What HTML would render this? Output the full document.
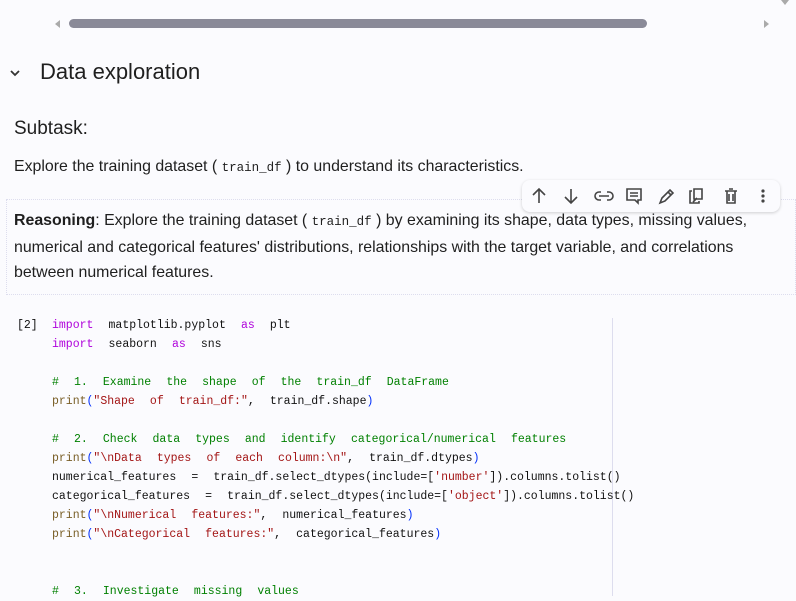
<!DOCTYPE html>
<html><head><style>
body{margin:0;width:796px;height:596px;overflow:hidden;background:#fbfbfe;font-family:"Liberation Sans",Arial,sans-serif;color:#1f1f1f;position:relative}
.a{position:absolute;white-space:nowrap}
.code{font-family:"Liberation Mono","Noto Sans CJK SC",monospace;font-size:11.5px;word-spacing:8.2px;color:#111;line-height:19px;white-space:pre}
.k{color:#af00db}.c{color:#008000}.s{color:#a31515}.f{color:#795e26}.p{color:#0431fa}
.ic{font-family:"Liberation Mono",monospace;font-size:12.5px}
</style></head><body>
<div class="a" style="left:55px;top:20px;width:0;height:0;border-top:4px solid transparent;border-bottom:4px solid transparent;border-right:5px solid #aaa"></div>
<div class="a" style="left:69px;top:19px;width:578px;height:9px;border-radius:5px;background:#8a8a98"></div>
<div class="a" style="left:764px;top:20px;width:0;height:0;border-top:4px solid transparent;border-bottom:4px solid transparent;border-left:5px solid #aaa"></div>
<div class="a" style="left:781px;top:0;width:0;height:0;border-left:4px solid transparent;border-right:4px solid transparent;border-top:5px solid #aaa"></div>
<svg class="a" style="left:8px;top:66px" width="14" height="14" viewBox="0 0 14 14"><path d="M3 5l4 4 4-4" fill="none" stroke="#333" stroke-width="1.8"/></svg>
<div class="a" style="left:40px;top:59px;font-size:22px;color:#1f1f1f">Data exploration</div>
<div class="a" style="left:14px;top:118px;font-size:19px">Subtask:</div>
<div class="a" style="left:14px;top:158px;font-size:15.9px">Explore the training dataset ( <span class="ic">train_df</span> ) to understand its characteristics.</div>
<div class="a" style="left:6px;top:199px;width:788px;height:94px;border:1px dotted #dde"></div>
<div class="a" style="left:14px;top:208px;font-size:15.9px;line-height:25px;white-space:normal;width:735px">
<b>Reasoning</b>: Explore the training dataset ( <span class="ic">train_df</span> ) by examining its shape, data types, missing values, numerical and categorical features' distributions, relationships with the target variable, and correlations between numerical features.</div>
<div class="a" style="left:522px;top:180px;width:258px;height:32px;background:#fbfbfe;border-radius:8px;box-shadow:0 1px 3px rgba(0,0,0,.18)"></div>
<svg class="a" style="left:522px;top:180px" width="258" height="32" viewBox="0 0 258 32" fill="none" stroke="#444" stroke-width="1.6">
<path d="M17 23V9M11 15l6-6 6 6"/>
<path d="M49 9v14M43 17l6 6 6-6"/>
<path d="M77 16h10M79 12h-2a4 4 0 000 8h2M85 12h2a4 4 0 010 8h-2"/>
<path d="M105 9h14v11h-3v3l-3-3h-8zM108 13h8M108 16h8"/>
<path d="M138 23l2-5 8-8 3 3-8 8zM146 12l3 3"/>
<path d="M170 11h-2v12h9v-2M172 9h8v10h-8zM171 22l4-4"/>
<path d="M203 11h12M205 11v12h8V11M207 9h4M207 14v7M211 14v7"/>
<circle cx="241" cy="11" r=".8" fill="#444"/><circle cx="241" cy="16" r=".8" fill="#444"/><circle cx="241" cy="21" r=".8" fill="#444"/>
</svg>
<div class="a" style="left:612px;top:318px;width:1px;height:278px;background:#dde"></div>
<div class="a code" style="left:17px;top:316px">[2]</div>
<div class="a code" style="left:52px;top:316px"><span class="k">import</span> matplotlib.pyplot <span class="k">as</span> plt
<span class="k">import</span> seaborn <span class="k">as</span> sns

<span class="c"># 1. Examine the shape of the train_df DataFrame</span>
<span class="f">print</span><span class="p">(</span><span class="s">"Shape of train_df:"</span>, train_df.shape<span class="p">)</span>

<span class="c"># 2. Check data types and identify categorical/numerical features</span>
<span class="f">print</span><span class="p">(</span><span class="s">"\nData types of each column:\n"</span>, train_df.dtypes<span class="p">)</span>
numerical_features = train_df.select_dtypes(include=[<span class="s">'number'</span>]).columns.tolist()
categorical_features = train_df.select_dtypes(include=[<span class="s">'object'</span>]).columns.tolist()
<span class="f">print</span><span class="p">(</span><span class="s">"\nNumerical features:"</span>, numerical_features<span class="p">)</span>
<span class="f">print</span><span class="p">(</span><span class="s">"\nCategorical features:"</span>, categorical_features<span class="p">)</span>


<span class="c"># 3. Investigate missing values</span></div>
</body></html>
